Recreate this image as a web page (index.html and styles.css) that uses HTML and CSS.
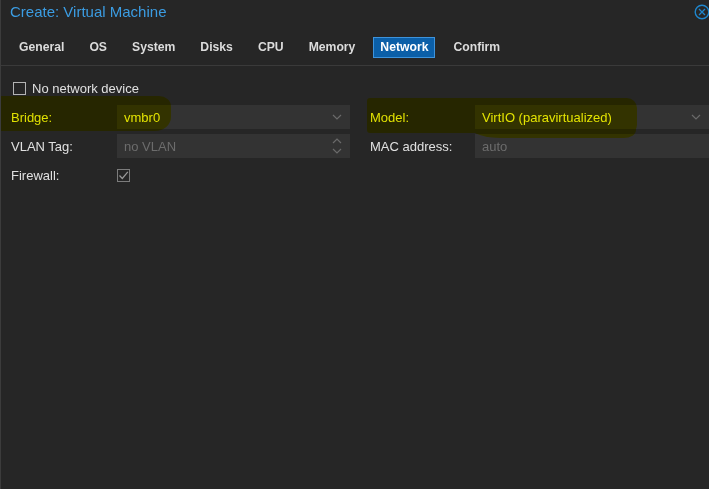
FILE: index.html
```html
<!DOCTYPE html>
<html>
<head>
<meta charset="utf-8">
<link rel="stylesheet" href="styles.css">
</head>
<body>
<div class="window">
  <div class="header">
    <span class="title">Create: Virtual Machine</span>
    <svg class="close" width="16" height="16" viewBox="0 0 16 16">
      <circle cx="8" cy="8" r="6.8" fill="none" stroke="#1f86cc" stroke-width="1.4"/>
      <path d="M5 5 L11 11 M11 5 L5 11" stroke="#1f86cc" stroke-width="1.3" fill="none"/>
    </svg>
  </div>
  <div class="tabs">
    <span class="tab">General</span>
    <span class="tab">OS</span>
    <span class="tab">System</span>
    <span class="tab">Disks</span>
    <span class="tab">CPU</span>
    <span class="tab">Memory</span>
    <span class="tab active">Network</span>
    <span class="tab">Confirm</span>
  </div>
  <div class="body">
    <div class="cb-row"><span class="cb"></span><span>No network device</span></div>
    <div class="cols">
      <div class="col">
        <div class="row">
          <span class="label">Bridge:</span>
          <div class="field"><span class="value">vmbr0</span>
            <svg class="trig" width="10" height="6" viewBox="0 0 10 6"><path d="M1 1 L5 5 L9 1" fill="none" stroke="#6a6a6a" stroke-width="1.2"/></svg>
          </div>
        </div>
        <div class="row">
          <span class="label">VLAN Tag:</span>
          <div class="field"><span class="value muted">no VLAN</span>
            <svg class="spin" width="10" height="16" viewBox="0 0 10 16"><path d="M1 5 L5 1 L9 5 M1 11 L5 15 L9 11" fill="none" stroke="#6a6a6a" stroke-width="1.2"/></svg>
          </div>
        </div>
        <div class="row">
          <span class="label">Firewall:</span>
          <span class="cb checked">
            <svg width="11" height="11" viewBox="0 0 11 11"><path d="M1.5 5.5 L4.3 8.5 L9.8 1.8" fill="none" stroke="#9a9a9a" stroke-width="1.2"/></svg>
          </span>
        </div>
      </div>
      <div class="col">
        <div class="row">
          <span class="label">Model:</span>
          <div class="field"><span class="value">VirtIO (paravirtualized)</span>
            <svg class="trig" width="10" height="6" viewBox="0 0 10 6"><path d="M1 1 L5 5 L9 1" fill="none" stroke="#6a6a6a" stroke-width="1.2"/></svg>
          </div>
        </div>
        <div class="row">
          <span class="label">MAC address:</span>
          <div class="field"><span class="value muted">auto</span></div>
        </div>
      </div>
    </div>
  </div>
  <div class="hl hl-bridge"></div>
  <div class="hl hl-model"></div>
  <div class="hl hl-model2"></div>
</div>
</body>
</html>
```
FILE: styles.css
```css
html, body {
  margin: 0;
  padding: 0;
  background: #262626;
}
body {
  font-family: "Liberation Sans", Arial, sans-serif;
  font-size: 13px;
  color: #e0e0e0;
}
.window {
  position: relative;
  width: 709px;
  height: 489px;
  box-sizing: border-box;
  background: #262626;
  border-left: 1px solid #3c3c3c;
  overflow: hidden;
}
.header {
  height: 28px;
  box-sizing: border-box;
  padding: 3px 0 0 9px;
  display: flex;
  justify-content: space-between;
  align-items: flex-start;
}
.title {
  font-size: 15px;
  line-height: 17px;
  color: #3b9ce2;
}
.close {
  margin-top: 1px;
  margin-right: -1px;
}
.tabs {
  display: flex;
  gap: 11px;
  padding: 9px 0 7px 11px;
  border-bottom: 1px solid #3a3a3a;
}
.tab {
  font-weight: bold;
  font-size: 12.2px;
  line-height: 19px;
  padding: 0 6px;
  border: 1px solid transparent;
  color: #dcdcdc;
}
.tab.active {
  background: #0b5fa8;
  border-color: #3d93dc;
  color: #ffffff;
}
.body {
  padding: 11px 0 0 10px;
}
.cb-row {
  display: flex;
  align-items: center;
  gap: 6px;
  height: 22px;
  padding-left: 2px;
  margin-bottom: 6px;
}
.cb {
  width: 13px;
  height: 13px;
  box-sizing: border-box;
  border: 1px solid #b4b4b4;
  display: inline-flex;
  align-items: center;
  justify-content: center;
}
.cb.checked {
  border-color: #7c7c7c;
}
.cols {
  display: grid;
  grid-template-columns: 339px 339px;
  column-gap: 20px;
}
.col {
  display: flex;
  flex-direction: column;
  gap: 5px;
}
.row {
  display: flex;
  align-items: center;
  height: 24px;
}
.label {
  width: 106px;
  flex: none;
  color: #e0e0e0;
}
.col + .col .label {
  width: 105px;
}
.field {
  flex: 1;
  height: 24px;
  background: #333333;
  display: flex;
  align-items: center;
  justify-content: space-between;
  padding: 0 8px 0 7px;
  box-sizing: border-box;
}
.value {
  color: #e4e4e4;
}
.muted {
  color: #6c6c6c;
}
.hl {
  position: absolute;
  background: #ffff00;
  mix-blend-mode: multiply;
  pointer-events: none;
}
.hl-bridge {
  left: -6px;
  top: 96px;
  width: 176px;
  height: 35px;
  border-radius: 2px 12px 16px 4px / 2px 10px 14px 4px;
}
.hl-model {
  left: 366px;
  top: 98px;
  width: 270px;
  height: 35px;
  border-radius: 3px 10px 8px 3px;
}
.hl-model2 {
  left: 470px;
  top: 118px;
  width: 165px;
  height: 20px;
  border-radius: 0 0 12px 30px / 0 0 8px 10px;
}
```
